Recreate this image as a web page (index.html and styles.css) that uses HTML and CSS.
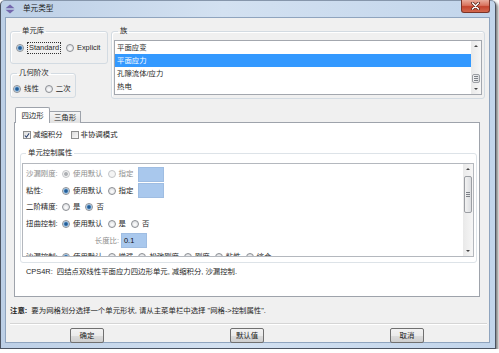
FILE: index.html
```html
<!DOCTYPE html>
<html lang="zh">
<head>
<meta charset="utf-8">
<title>单元类型</title>
<link rel="stylesheet" href="styles.css">
</head>
<body>
<div class="win">
  <div class="titlebar">
    <svg class="appicon" width="10" height="10" viewBox="0 0 10 10"><path d="M5 0.5 L9.5 4.2 H0.5Z" fill="#7467ad"/><path d="M0.5 5.8 H9.5 L5 9.5Z" fill="#7467ad"/></svg>
    <span class="title">单元类型</span>
    <div class="close"><svg width="11" height="8" viewBox="0 0 11 8"><path d="M2.5 1 L8.5 7 M8.5 1 L2.5 7" stroke="#5b2318" stroke-width="3" stroke-linecap="round"/><path d="M2.5 1 L8.5 7 M8.5 1 L2.5 7" stroke="#fff" stroke-width="1.5" stroke-linecap="round"/></svg></div>
  </div>
  <div class="client">
    <div class="toprow">
      <div class="leftcol">
        <fieldset class="grp g-lib"><legend>单元库</legend>
          <div class="opts">
            <span class="opt"><i class="radio on"></i><span class="focus">Standard</span></span>
            <span class="opt"><i class="radio"></i>Explicit</span>
          </div>
        </fieldset>
        <fieldset class="grp g-order"><legend>几何阶次</legend>
          <div class="opts">
            <span class="opt"><i class="radio on"></i>线性</span>
            <span class="opt"><i class="radio"></i>二次</span>
          </div>
        </fieldset>
      </div>
      <fieldset class="grp g-fam"><legend>族</legend>
        <div class="listbox">
          <ul class="items">
            <li>平面应变</li>
            <li class="sel">平面应力</li>
            <li>孔隙流体/应力</li>
            <li>热电</li>
          </ul>
          <div class="vscroll">
            <svg class="arr" width="10" height="10" viewBox="0 0 10 10"><path d="M3 6 H7 L5 4Z" fill="#444"/></svg>
            <div class="track short"><div class="thumb"><i></i><i></i><i></i></div></div>
            <svg class="arr" width="10" height="10" viewBox="0 0 10 10"><path d="M3 4 H7 L5 6Z" fill="#444"/></svg>
          </div>
        </div>
      </fieldset>
    </div>

    <div class="tabs">
      <span class="tab active">四边形</span><span class="tab">三角形</span>
    </div>
    <div class="panel">
      <div class="checks">
        <span class="opt"><i class="check on"><svg width="7" height="7" viewBox="0 0 7 7"><path d="M1 3.5 L2.8 5.5 L6 1" fill="none" stroke="#2a3f6a" stroke-width="1.2"/></svg></i>减缩积分</span>
        <span class="opt"><i class="check"></i>非协调模式</span>
      </div>
      <fieldset class="grp g-ctl"><legend>单元控制属性</legend>
        <div class="scrollbox">
          <div class="rows">
            <div class="row dis"><span class="lbl">沙漏刚度:</span><span class="opt"><i class="radio on"></i>使用默认</span><span class="opt"><i class="radio"></i>指定</span><span class="field"></span></div>
            <div class="row"><span class="lbl">粘性:</span><span class="opt"><i class="radio on"></i>使用默认</span><span class="opt"><i class="radio"></i>指定</span><span class="field"></span></div>
            <div class="row"><span class="lbl">二阶精度:</span><span class="opt"><i class="radio"></i>是</span><span class="opt"><i class="radio on"></i>否</span></div>
            <div class="row"><span class="lbl">扭曲控制:</span><span class="opt"><i class="radio on"></i>使用默认</span><span class="opt"><i class="radio"></i>是</span><span class="opt"><i class="radio"></i>否</span></div>
            <div class="row"><span class="lbl lbl-wide">长度比:</span><span class="field val">0.1</span></div>
            <div class="row"><span class="lbl">沙漏控制:</span><span class="opt"><i class="radio on"></i>使用默认</span><span class="opt"><i class="radio"></i>增强</span><span class="opt"><i class="radio"></i>松弛刚度</span><span class="opt"><i class="radio"></i>刚度</span><span class="opt"><i class="radio"></i>粘性</span><span class="opt"><i class="radio"></i>综合</span></div>
          </div>
          <div class="vscroll">
            <svg class="arr" width="10" height="10" viewBox="0 0 10 10"><path d="M3 6 H7 L5 4Z" fill="#444"/></svg>
            <div class="track tall"><div class="thumb"><i></i><i></i><i></i></div></div>
            <svg class="arr" width="10" height="10" viewBox="0 0 10 10"><path d="M3 4 H7 L5 6Z" fill="#444"/></svg>
          </div>
        </div>
      </fieldset>
      <p class="desc">CPS4R:&nbsp; 四结点双线性平面应力四边形单元, 减缩积分, 沙漏控制.</p>
    </div>

    <p class="note"><b>注意:</b>&nbsp; 要为网格划分选择一个单元形状, 请从主菜单栏中选择 "网格-&gt;控制属性".</p>
    <div class="sep"></div>
    <div class="buttons">
      <button class="btn">确定</button>
      <button class="btn">默认值</button>
      <button class="btn">取消</button>
    </div>
  </div>
</div>
</body>
</html>
```
FILE: styles.css
```css
html, body {
  margin: 0;
  background: #ffffff;
}
body {
  font: 7.4px/10px "Liberation Sans", "Noto Sans CJK SC", sans-serif;
  color: #262626;
}

.win {
  width: 496px;
  height: 349px;
  box-sizing: border-box;
  border: 1px solid #4c5462;
  border-top-color: #8696ab;
  border-radius: 5px 5px 0 0;
  background: linear-gradient(90deg, #bccfe6 0%, #d3e1f1 45%, #c2d5eb 100%);
  box-shadow: 2px 2px 3px rgba(0, 0, 0, 0.5);
  display: flex;
  flex-direction: column;
  padding: 0 5px 5px 4px;
}

.titlebar {
  height: 16px;
  display: flex;
  align-items: center;
  flex: none;
}
.appicon { display: block; flex: none; }
.title {
  margin-left: 8px;
  font-size: 7.6px;
  color: #1a1a1a;
}
.close {
  margin-left: auto;
  align-self: flex-start;
  margin-top: -1px;
  width: 29px;
  height: 13px;
  box-sizing: border-box;
  border: 1px solid #7a3327;
  border-top: none;
  border-radius: 0 0 3px 3px;
  background: linear-gradient(#e9ab9b 0%, #d9735e 45%, #c4442e 55%, #d3684e 100%);
  display: flex;
  align-items: center;
  justify-content: center;
}
.close svg { display: block; }

.client {
  flex: 1;
  background: #f0f0f0;
  border: 1px solid #8fa4be;
  display: flex;
  flex-direction: column;
  min-height: 0;
}

/* group boxes */
.grp {
  margin: 0;
  border: 1px solid #d3dbe2;
  border-radius: 3px;
  box-sizing: border-box;
  min-inline-size: 0;
  box-shadow: inset 1px 1px 0 #fff;
}
.grp legend {
  padding: 0 2px;
  margin-left: 4px;
  line-height: 10px;
}

.toprow {
  margin: 8px 4px 0 4px;
  height: 73px;
  display: flex;
  gap: 3px;
  flex: none;
}
.leftcol {
  width: 98px;
  display: flex;
  flex-direction: column;
  gap: 4px;
  flex: none;
}
.g-lib { height: 38px; padding: 6px 0 0 5px; }
.g-order { width: 66px; height: 30px; padding: 5px 0 0 2px; }
.g-fam { flex: 1; height: 73px; padding: 4px 2px 0 2px; }

.opts {
  display: flex;
  align-items: center;
  height: 12px;
  gap: 4px;
}
.opt {
  display: inline-flex;
  align-items: center;
  gap: 3px;
  white-space: nowrap;
}
.g-lib .opts { gap: 5px; }
.g-order .opts { gap: 6px; }

.focus {
  border: 1px dotted #333;
  padding: 0 1px;
  line-height: 10px;
}

.radio {
  display: inline-block;
  width: 8px;
  height: 8px;
  box-sizing: border-box;
  border: 1px solid #8c8f94;
  border-radius: 50%;
  background: radial-gradient(circle at 50% 60%, #ffffff 0, #dfe1e4 70%);
  flex: none;
}
.radio.on {
  background: radial-gradient(circle, #1c4f82 0, #2d6aa6 1.4px, #9cc2e4 2.4px, #eef3f8 3.2px);
}
.dis { color: #8d8d8d; }
.dis .radio {
  border-color: #c2c4c7;
  background: #f4f4f4;
}
.dis .radio.on {
  background: radial-gradient(circle, #a4a7ab 0, #b5b8bc 1.6px, #f4f4f4 2.4px);
}

.check {
  display: inline-flex;
  align-items: center;
  justify-content: center;
  width: 8px;
  height: 8px;
  box-sizing: border-box;
  border: 1px solid #8e8f8f;
  background: linear-gradient(135deg, #dcdcdc, #fafafa);
  flex: none;
}
.check svg { display: block; }

/* list box */
.listbox {
  height: 55px;
  box-sizing: border-box;
  border: 1px solid #a3a7ae;
  background: #fff;
  display: flex;
}
.items {
  list-style: none;
  margin: 0;
  padding: 0;
  flex: 1;
}
.items li {
  height: 13px;
  line-height: 13px;
  padding-left: 2px;
}
.items li.sel {
  background: #3399ff;
  color: #fff;
}

.vscroll {
  width: 10px;
  flex: none;
  display: flex;
  flex-direction: column;
  background: linear-gradient(90deg, #e9e9e9, #f6f6f6);
}
.arr { display: block; flex: none; }
.track {
  flex: 1;
  display: flex;
  flex-direction: column;
  padding: 0 1px;
}
.track.short { padding-top: 23px; }
.track.tall { padding-top: 2px; }
.thumb {
  box-sizing: border-box;
  border: 1px solid #9b9ea3;
  border-radius: 2px;
  background: linear-gradient(90deg, #f2f2f2, #dcdee1);
  display: flex;
  flex-direction: column;
  align-items: center;
  justify-content: center;
  gap: 1px;
}
.track.short .thumb { height: 9px; }
.track.tall .thumb { height: 37px; }
.thumb i {
  display: block;
  width: 4px;
  height: 1px;
  background: #7d8187;
}

/* tabs */
.tabs {
  margin: 8px 0 -1px 9px;
  height: 16px;
  display: flex;
  align-items: flex-end;
  flex: none;
  position: relative;
  z-index: 1;
}
.tab {
  box-sizing: border-box;
  height: 12px;
  width: 32px;
  border: 1px solid #9ea3ab;
  border-bottom: none;
  background: linear-gradient(#f5f5f5, #e1e1e1);
  text-align: center;
  line-height: 11px;
  margin-left: -1px;
}
.tab.active {
  height: 16px;
  width: 35px;
  margin-left: 0;
  background: #fff;
  line-height: 16px;
  border-radius: 2px 2px 0 0;
}

.panel {
  margin-left: 8px;
  width: 466px;
  height: 175px;
  box-sizing: border-box;
  border: 1px solid #9ea3ab;
  background: #fff;
  flex: none;
  display: flex;
  flex-direction: column;
}
.checks {
  margin-top: 7px;
  padding-left: 8px;
  height: 10px;
  display: flex;
  align-items: center;
  gap: 8px;
}
.checks .opt { gap: 2px; }

.g-ctl {
  margin: 8px 0 0 5px;
  width: 457px;
  height: 115px;
  padding: 5px 2px 4px 1px;
  border-color: #dde3e8;
}
.scrollbox {
  height: 94px;
  box-sizing: border-box;
  border: 1px solid #b4b8be;
  display: flex;
  background: #fff;
}
.rows {
  flex: 1;
  overflow: hidden;
  padding: 2px 0 0 3px;
}
.row {
  height: 16.6px;
  display: flex;
  align-items: center;
  white-space: nowrap;
}
.row .opt { margin-right: 5px; }
.lbl {
  width: 36px;
  flex: none;
}
.lbl-wide {
  width: 93px;
  text-align: right;
  color: #8d8d8d;
  margin-right: 2px;
}
.field {
  display: inline-block;
  width: 26px;
  height: 15px;
  box-sizing: border-box;
  border: 1px solid #9fbde2;
  background: #a9c8ed;
  flex: none;
}
.field.val {
  padding-left: 2px;
  line-height: 13px;
  color: #111;
}

.desc {
  margin: 4px 0 0 11px;
  line-height: 10px;
}

.note {
  margin: 9px 0 0 4px;
  line-height: 10px;
  flex: none;
}
.note b { font-weight: bold; }

.sep {
  margin: 7px 2px 0 4px;
  height: 0;
  border-top: 1px solid #d5d5d5;
  border-bottom: 1px solid #ffffff;
  flex: none;
}

.buttons {
  margin-top: 3px;
  padding-left: 64px;
  display: flex;
  gap: 126px;
  flex: none;
}
.btn {
  width: 34px;
  height: 15px;
  box-sizing: border-box;
  padding: 0;
  border: 1px solid #707070;
  border-radius: 2px;
  background: linear-gradient(#f2f2f2 0%, #ebebeb 50%, #dddddd 50%, #cfcfcf 100%);
  font: inherit;
  line-height: 13px;
  color: #1b1b1b;
  text-align: center;
}
```
